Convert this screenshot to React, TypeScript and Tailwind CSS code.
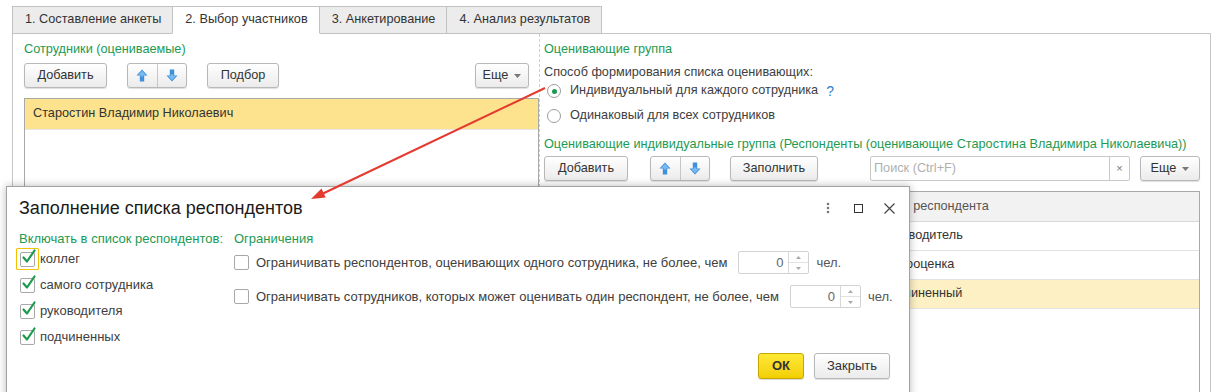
import React from "react";

const GREEN = "text-[#1d9a52]";

function Btn({ children, className = "" }: { children: React.ReactNode; className?: string }) {
  return (
    <div
      className={`flex items-center justify-center rounded-[3px] border border-[#b8b8b8] bg-linear-to-b from-white to-[#ebebeb] shadow-[0_1px_1px_rgba(0,0,0,0.13)] text-[#333] ${className}`}
    >
      {children}
    </div>
  );
}

function Arrow({ down = false }: { down?: boolean }) {
  return (
    <svg width="12" height="13" viewBox="0 0 12 13" style={down ? { transform: "rotate(180deg)" } : undefined}>
      <polygon points="6,0.5 11.5,6.5 8.2,6.5 8.2,12.5 3.8,12.5 3.8,6.5 0.5,6.5" fill="#3d90dc" />
      <polygon points="6,1.8 9.8,6 7.4,6 7.4,7.5 4.6,7.5 4.6,6 2.2,6" fill="#79bbf0" />
    </svg>
  );
}

function ArrowGroup({ className = "" }: { className?: string }) {
  return (
    <div
      className={`flex h-full w-[60px] rounded-[3px] border border-[#b8b8b8] bg-linear-to-b from-white to-[#ebebeb] shadow-[0_1px_1px_rgba(0,0,0,0.13)] ${className}`}
    >
      <div className="flex flex-1 items-center justify-center border-r border-[#c6c6c6]">
        <Arrow />
      </div>
      <div className="flex flex-1 items-center justify-center">
        <Arrow down />
      </div>
    </div>
  );
}

function Caret() {
  return (
    <svg width="7" height="4" viewBox="0 0 7 4" className="ml-[6px] mt-[1px]">
      <polygon points="0,0 7,0 3.5,4" fill="#777" />
    </svg>
  );
}

function Check({ checked = false, focus = false }: { checked?: boolean; focus?: boolean }) {
  return (
    <div
      className={`relative flex h-[22px] w-[23px] shrink-0 items-center justify-center rounded-[1px] border ${
        focus ? "border-[#f3c300]" : "border-transparent"
      }`}
    >
      <div className="h-[15px] w-[15px] rounded-[2px] border border-[#a8a8a8] bg-white" />
      {checked && (
        <svg width="18" height="18" viewBox="0 0 18 18" className="absolute left-[3px] top-[-1px]">
          <path d="M3.5 9.5 L7 13.5 L14.5 2.5" fill="none" stroke="#1a9a4c" strokeWidth="2.2" strokeLinecap="round" strokeLinejoin="round" />
        </svg>
      )}
    </div>
  );
}

function NumInput() {
  return (
    <div className="flex h-[23px] w-[71px] rounded-[2px] border border-[#d2d2d2] bg-white">
      <div className="flex flex-1 items-center justify-end pr-[5px] text-[13px] text-[#666]">0</div>
      <div className="flex w-[20px] flex-col border-l border-[#d8d8d8]">
        <div className="flex flex-1 items-center justify-center border-b border-[#e2e2e2]">
          <svg width="5" height="3" viewBox="0 0 5 3"><polygon points="2.5,0 5,3 0,3" fill="#aaa" /></svg>
        </div>
        <div className="flex flex-1 items-center justify-center">
          <svg width="5" height="3" viewBox="0 0 5 3"><polygon points="0,0 5,0 2.5,3" fill="#aaa" /></svg>
        </div>
      </div>
    </div>
  );
}

function Radio({ on = false }: { on?: boolean }) {
  return (
    <div className="flex h-[14px] w-[14px] items-center justify-center rounded-full border border-[#9d9d9d] bg-white">
      {on && <div className="h-[5px] w-[5px] rounded-full bg-[#1d9a52]" />}
    </div>
  );
}

export default function App() {
  const tabs = ["1. Составление анкеты", "2. Выбор участников", "3. Анкетирование", "4. Анализ результатов"];
  return (
    <div className="relative h-[392px] w-[1225px] overflow-hidden bg-white font-['Liberation_Sans',Arial,sans-serif] text-[12.7px] text-[#404040]">
      {/* Tabs */}
      <div className="flex pl-[12px] pt-[6px]">
        {tabs.map((t, i) => (
          <div
            key={t}
            className={`relative flex h-[28px] items-center whitespace-nowrap border border-[#c2c2c2] pl-[12px] pr-[11px] text-[#333] ${
              i === 0 ? "" : "-ml-px"
            } ${i === 1 ? "z-10 border-b-white bg-white" : "bg-[#ececec]"}`}
          >
            {t}
          </div>
        ))}
      </div>

      {/* Main panel */}
      <div className="-mt-px ml-[12px] flex h-[380px] w-[1199px] border border-[#c6c6c6]">
        {/* Left column */}
        <div className="w-[526px] shrink-0 pl-[11px] pt-[7px]">
          <div className={`h-[16px] leading-[16px] ${GREEN}`}>Сотрудники (оцениваемые)</div>
          <div className="mt-[6px] flex h-[25px] pr-[10px]">
            <Btn className="w-[83px]">Добавить</Btn>
            <ArrowGroup className="ml-[20px]" />
            <Btn className="ml-[20px] w-[72px]">Подбор</Btn>
            <Btn className="ml-auto w-[54px]">
              Еще
              <Caret />
            </Btn>
          </div>
          <div className="mt-[10px] h-[240px] border border-[#a9a9a9] bg-white">
            <div className="flex h-[31px] items-center border-b border-[#e6e6e6] bg-[#fde38d] pl-[8px] text-[#333]">
              Старостин Владимир Николаевич
            </div>
          </div>
        </div>

        {/* Right column */}
        <div className="flex-1 border-l border-dashed border-[#cfcfcf] pl-[4px] pr-[10px] pt-[7px]">
          <div className={`h-[16px] leading-[16px] ${GREEN}`}>Оценивающие группа</div>
          <div className="mt-[7px] h-[16px] leading-[16px]">Способ формирования списка оценивающих:</div>
          <div className="mt-[1px] flex h-[20px] items-center pl-[3px]">
            <Radio on />
            <span className="ml-[9px]">Индивидуальный для каждого сотрудника</span>
            <span className="ml-[8px] text-[14px] text-[#2f7fd0]">?</span>
          </div>
          <div className="mt-[5px] flex h-[20px] items-center pl-[3px]">
            <Radio />
            <span className="ml-[9px]">Одинаковый для всех сотрудников</span>
          </div>
          <div className={`mt-[10px] h-[16px] whitespace-nowrap leading-[16px] ${GREEN}`}>
            Оценивающие индивидуальные группа (Респонденты (оценивающие Старостина Владимира Николаевича))
          </div>
          <div className="mt-[4px] flex h-[25px]">
            <Btn className="w-[84px]">Добавить</Btn>
            <ArrowGroup className="ml-[22px]" />
            <Btn className="ml-[20px] w-[88px]">Заполнить</Btn>
            <div className="ml-auto flex h-[25px] w-[260px] rounded-[2px] border border-[#c9c9c9] bg-white">
              <div className="flex flex-1 items-center pl-[3px] text-[#b0b0b0]">Поиск (Ctrl+F)</div>
              <div className="flex w-[20px] items-center justify-center border-l border-[#c9c9c9] text-[11px] text-[#777]">×</div>
            </div>
            <Btn className="ml-[10px] w-[60px]">
              Еще
              <Caret />
            </Btn>
          </div>
          <div className="mt-[10px] h-[240px] border border-[#a9a9a9] bg-white">
            <div className="flex h-[30px] items-center border-b border-[#d8d8d8] bg-[#f2f2f2] text-[#555]">
              <div className="w-[329px]" />
              <div className="pl-[7px]">Роль респондента</div>
            </div>
            {["Руководитель", "Самооценка", "Подчиненный"].map((r, i) => (
              <div
                key={r}
                className={`flex h-[29px] items-center border-b border-[#e2e2e2] text-[#333] ${i === 2 ? "bg-[#fdf0c5]" : ""}`}
              >
                <div className="w-[329px]" />
                <div className="pl-[7px]">{r}</div>
              </div>
            ))}
          </div>
        </div>
      </div>

      {/* Dialog */}
      <div className="absolute left-[6px] top-[186px] z-20 flex h-[220px] w-[904px] flex-col border border-[#a3a3a3] bg-white text-[13px] shadow-[0_0_8px_rgba(0,0,0,0.28)]">
        <div className="mt-[9px] flex h-[24px] items-center pl-[12px] pr-[14px]">
          <div className="text-[18px] text-[#1a1a1a]">Заполнение списка респондентов</div>
          <div className="ml-auto flex items-center">
            <svg width="4" height="12" viewBox="0 0 4 12">
              <circle cx="2" cy="2" r="1.3" fill="#777" />
              <circle cx="2" cy="6" r="1.3" fill="#777" />
              <circle cx="2" cy="10" r="1.3" fill="#777" />
            </svg>
            <div className="ml-[24px] h-[9px] w-[9px] border border-[#333]" />
            <svg width="11" height="11" viewBox="0 0 11 11" className="ml-[21px]">
              <path d="M0.5 0.5 L10.5 10.5 M10.5 0.5 L0.5 10.5" stroke="#444" strokeWidth="1.2" />
            </svg>
          </div>
        </div>
        <div className="mt-[11px] flex pl-[12px]">
          <div className="w-[215px]">
            <div className={`h-[15px] leading-[15px] ${GREEN}`}>Включать в список респондентов:</div>
            {["коллег", "самого сотрудника", "руководителя", "подчиненных"].map((c, i) => (
              <div key={c} className="flex h-[26px] items-center">
                <div className="-ml-[3px]">
                  <Check checked focus={i === 0} />
                </div>
                <span className="ml-[1px]">{c}</span>
              </div>
            ))}
          </div>
          <div className="flex-1">
            <div className={`h-[15px] leading-[15px] ${GREEN}`}>Ограничения</div>
            <div className="mt-[5px] flex h-[23px] items-center">
              <div className="-ml-[4px]">
                <Check />
              </div>
              <span className="ml-[3px]">Ограничивать респондентов, оценивающих одного сотрудника, не более, чем</span>
              <div className="ml-[11px]">
                <NumInput />
              </div>
              <span className="ml-[7px] text-[#555]">чел.</span>
            </div>
            <div className="mt-[11px] flex h-[23px] items-center">
              <div className="-ml-[4px]">
                <Check />
              </div>
              <span className="ml-[3px]">Ограничивать сотрудников, которых может оценивать один респондент, не более, чем</span>
              <div className="ml-[11px]">
                <NumInput />
              </div>
              <span className="ml-[7px] text-[#555]">чел.</span>
            </div>
          </div>
        </div>
        <div className="mt-[3px] flex justify-end pr-[19px]">
          <div className="flex h-[26px] w-[46px] items-center justify-center rounded-[3px] border border-[#c8a600] bg-linear-to-b from-[#ffe933] to-[#f3cf00] font-bold text-[#333] shadow-[0_1px_1px_rgba(0,0,0,0.15)]">
            ОК
          </div>
          <Btn className="ml-[10px] h-[26px] w-[76px]">Закрыть</Btn>
        </div>
      </div>

      {/* Red annotation arrow */}
      <svg className="pointer-events-none absolute left-0 top-0 z-30" width="1225" height="392">
        <line x1="545" y1="88" x2="322" y2="194" stroke="#e53a2f" strokeWidth="2" />
        <polygon points="311,199 325.7,197.5 321.5,188.5" fill="#e53a2f" />
      </svg>
    </div>
  );
}
